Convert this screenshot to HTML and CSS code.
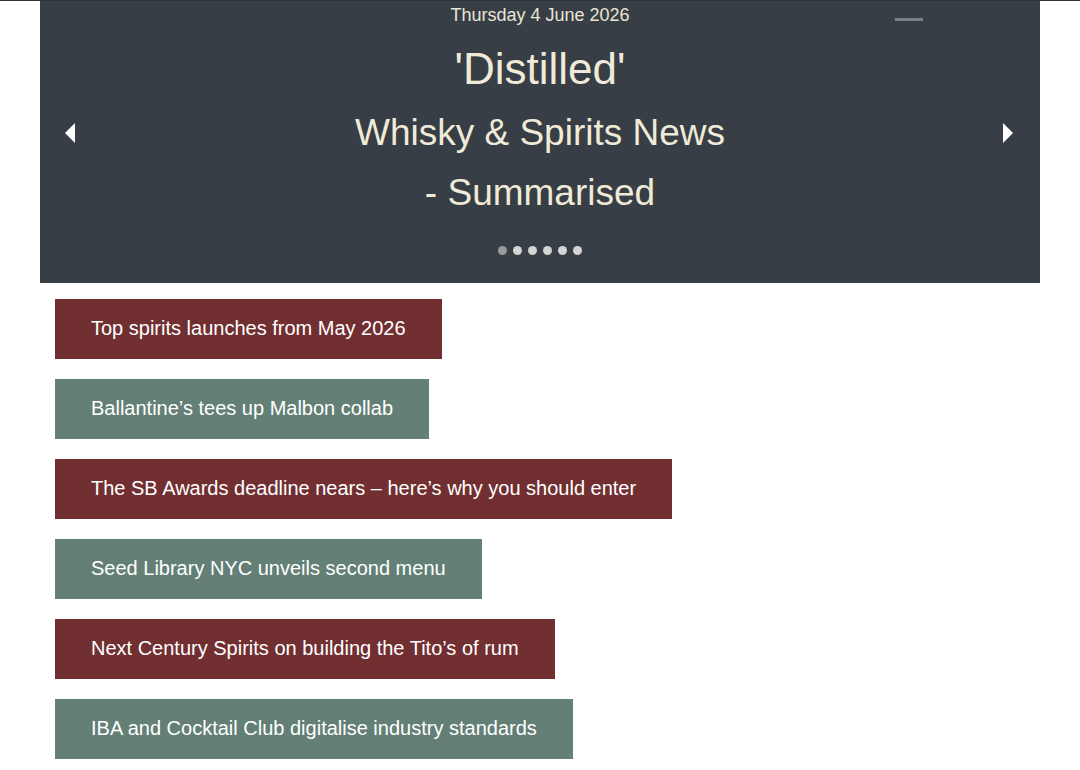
FILE: index.html
```html
<!DOCTYPE html>
<html lang="en">
<head>
  <meta charset="UTF-8" />
  <meta name="viewport" content="width=device-width, initial-scale=1.0" />
  <title>Distilled | Whisky &amp; Spirits News</title>
  <link rel="stylesheet" href="styles.css">
</head>
<body>
  <header class="hero">
    <span class="minimise"></span>
    <p class="date">Thursday 4 June 2026</p>
    <h1>'Distilled'</h1>
    <h2>Whisky &amp; Spirits News</h2>
    <h2>- Summarised</h2>
    <span class="arrow arrow-left"></span>
    <span class="arrow arrow-right"></span>
    <div class="dots">
      <span class="dot active"></span>
      <span class="dot"></span>
      <span class="dot"></span>
      <span class="dot"></span>
      <span class="dot"></span>
      <span class="dot"></span>
    </div>
  </header>

  <main class="stories">
    <a class="story red" href="#">Top spirits launches from May 2026</a>
    <a class="story green" href="#">Ballantine’s tees up Malbon collab</a>
    <a class="story red" href="#">The SB Awards deadline nears – here’s why you should enter</a>
    <a class="story green" href="#">Seed Library NYC unveils second menu</a>
    <a class="story red" href="#">Next Century Spirits on building the Tito’s of rum</a>
    <a class="story green" href="#">IBA and Cocktail Club digitalise industry standards</a>
  </main>
</body>
</html>
```

FILE: styles.css
```css
body {
  margin: 0;
  border-top: 1px solid #2f3133;
  font-family: "Liberation Sans", Arial, sans-serif;
  background: #fff;
}
.hero {
  position: relative;
  margin: 0 40px;
  height: 282px;
  background: #373e45;
  color: #f0ead8;
  text-align: center;
}
.date {
  margin: 0;
  padding-top: 4px;
  font-size: 18px;
  color: #e9e5d6;
}
.hero h1 {
  margin: 0;
  padding-top: 16px;
  font-size: 44px;
  font-weight: normal;
  line-height: 54px;
}
.hero h2 {
  margin: 0;
  font-size: 37px;
  font-weight: normal;
  line-height: 60px;
}
.hero h1 + h2 {
  margin-top: 7px;
}
.minimise {
  position: absolute;
  top: 17px;
  right: 117px;
  width: 28px;
  height: 3px;
  background: #7b8285;
}
.arrow {
  position: absolute;
  top: 122px;
  width: 0;
  height: 0;
  border-top: 10px solid transparent;
  border-bottom: 10px solid transparent;
}
.arrow-left {
  left: 25px;
  border-right: 10px solid #fff;
}
.arrow-right {
  right: 27px;
  border-left: 10px solid #fff;
}
.dots {
  position: absolute;
  left: 0;
  right: 0;
  top: 245px;
  display: flex;
  justify-content: center;
  gap: 6px;
}
.dot {
  width: 9px;
  height: 9px;
  border-radius: 50%;
  background: #d4d4d4;
}
.dot.active {
  background: #9a9a9a;
}
.stories {
  display: flex;
  flex-direction: column;
  align-items: flex-start;
  gap: 20px;
  padding: 16px 55px;
}
.story {
  display: block;
  height: 60px;
  line-height: 58px;
  padding: 0 36px;
  font-size: 20px;
  color: #fff;
  text-decoration: none;
}
.story.red {
  background: #712f31;
}
.story.green {
  background: #637f76;
}
```
